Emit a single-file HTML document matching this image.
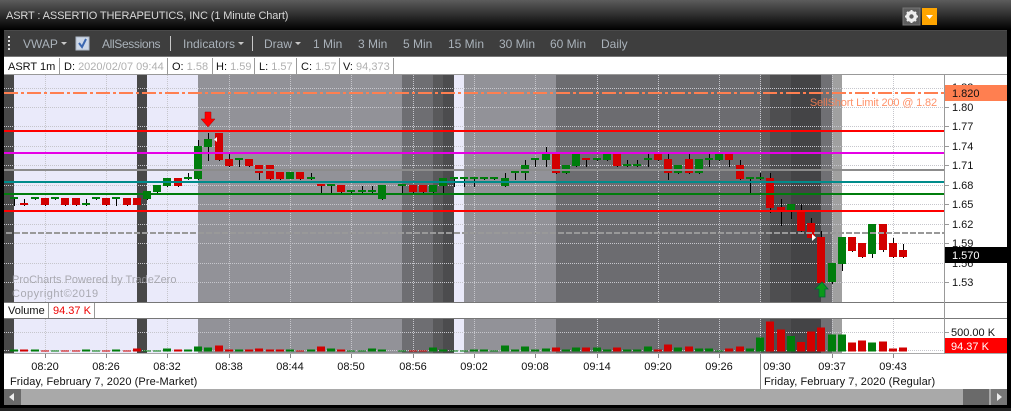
<!DOCTYPE html>
<html><head><meta charset="utf-8"><style>
html,body{margin:0;padding:0;background:#000}
#r{position:relative;width:1011px;height:411px;overflow:hidden;background:#000;font-family:"Liberation Sans",sans-serif;font-size:11px}
#r div{position:absolute;white-space:nowrap}
#hd{left:0;top:0;width:1011px;height:30px;background:linear-gradient(#5c5c5c,#000)}
#tb{left:4px;top:30px;width:1003px;height:27px;background:#3e3e3e;border-top:1px solid #4a4a4a;box-sizing:border-box}
.t{color:#aab2ba;top:37px;line-height:15px;font-size:12px}
.c{top:360px;line-height:14px;color:#111;width:40px;text-align:center;margin-left:-20px}
.a{left:952px;color:#111;line-height:14px}
.i{top:58px;height:16px;line-height:18px;color:#111;background:#fff;border-right:1px solid #999;box-sizing:border-box}
.i span{color:#b0b0b0}
</style></head><body><div id="r">
<div id="hd"></div>
<div style="left:6px;top:9px;color:#d8d8d8;line-height:14px;letter-spacing:-.12px">ASRT : ASSERTIO THERAPEUTICS, INC (1 Minute Chart)</div>
<div id="tb"></div>
<div style="left:4px;top:57px;width:1003px;height:18px;background:#fff"></div>
<div class="i" style="left:4px;width:56px;padding-left:4px">ASRT 1m</div>
<div class="i" style="left:60px;width:108px;padding-left:4px">D: <span>2020/02/07 09:44</span></div>
<div class="i" style="left:168px;width:45px;padding-left:4px">O: <span>1.58</span></div>
<div class="i" style="left:213px;width:42px;padding-left:3px">H: <span>1.59</span></div>
<div class="i" style="left:255px;width:42px;padding-left:4px">L: <span>1.57</span></div>
<div class="i" style="left:297px;width:43px;padding-left:4px">C: <span>1.57</span></div>
<div class="i" style="left:340px;width:54px;padding-left:3px">V: <span>94,373</span></div>

<svg width="1011" height="411" style="position:absolute;left:0;top:0" shape-rendering="crispEdges">
<rect x="4" y="30" width="1003" height="1" fill="#4a4a4a"/>
<rect x="4" y="56" width="1003" height="1" fill="#777"/>
<path fill="#ddd" d="M8 36h2v2h-2zM8 40h2v2h-2zM8 44h2v2h-2zM8 48h2v2h-2z"/>
<path fill="#c8c8c8" shape-rendering="auto" d="M61 42h6l-3 3zM238 42h6l-3 3zM295 42h6l-3 3z"/>
<rect x="76" y="37" width="13" height="13" fill="#cdd8e8" stroke="#aeb8c6"/>
<path d="M79 43l3 4 4-8" fill="none" stroke="#3a66b0" stroke-width="2" shape-rendering="auto"/>
<rect x="170" y="36" width="1" height="15" fill="#c8c8c8"/><rect x="252" y="36" width="1" height="15" fill="#c8c8c8"/>
<rect x="903" y="8" width="17" height="17" fill="#5e5e5e" stroke="#777"/>
<circle cx="911.500" cy="16.500" r="4.200" fill="none" stroke="#eee" stroke-width="2.600" shape-rendering="auto"/>
<path stroke="#eee" stroke-width="2" shape-rendering="auto" d="M911.500 10v13M905 16.500h13M907 12l9 9M916 12l-9 9"/>
<circle cx="911.500" cy="16.500" r="2.200" fill="#5e5e5e" shape-rendering="auto"/>
<rect x="922" y="8" width="15" height="17" fill="#ffa500"/>
<path d="M926 15h7l-3.500 4z" fill="#fff" shape-rendering="auto"/>
<rect x="0" y="30" width="4" height="375" fill="#000"/><rect x="1007" y="30" width="4" height="375" fill="#000"/>
<g>
<rect x="4" y="75" width="1003" height="314" fill="#fff"/>
<rect x="4" y="75" width="10" height="278" fill="#484848"/>
<rect x="14" y="75" width="123" height="278" fill="#eaeafa"/>
<rect x="137" y="75" width="10" height="278" fill="#484848"/>
<rect x="147" y="75" width="51" height="278" fill="#eaeafa"/>
<rect x="198" y="75" width="204" height="278" fill="#929298"/>
<rect x="402" y="75" width="31" height="278" fill="#6e6e72"/>
<rect x="433" y="75" width="10" height="278" fill="#59595b"/>
<rect x="443" y="75" width="11" height="278" fill="#4c4c4e"/>
<rect x="454" y="75" width="10" height="278" fill="#eaeafa"/>
<rect x="464" y="75" width="92" height="278" fill="#929298"/>
<rect x="556" y="75" width="205" height="278" fill="#6c6c70"/>
<rect x="761" y="75" width="9" height="278" fill="#5e5e60"/>
<rect x="770" y="75" width="21" height="278" fill="#4e4e50"/>
<rect x="791" y="75" width="30" height="278" fill="#444446"/>
<rect x="821" y="75" width="11" height="278" fill="#707074"/>
<rect x="832" y="75" width="10" height="278" fill="#a0a0a0"/>
</g>
<path fill="none" stroke="#c6c6cc" stroke-dasharray="1 1" d="M4 88.500H944M4 107.500H944M4 126.500H944M4 146.500H944M4 165.500H944M4 185.500H944M4 204.500H944M4 224.500H944M4 243.500H944M4 263.500H944M4 282.500H944M4 332.500H944M4 350.500H944"/>
<path fill="none" stroke="#c6c6cc" stroke-dasharray="1 1" d="M45.500 75V353M106.500 75V353M167.500 75V353M229.500 75V353M290.500 75V353M351.500 75V353M413.500 75V353M474.500 75V353M535.500 75V353M597.500 75V353M658.500 75V353M719.500 75V353M760.500 75V353M832.500 75V353M893.500 75V353"/>
<g transform="translate(0 137) scale(1 .33333)">
<path fill="#000" d="M14 180h1v27h-1zM24 186h1v21h-1zM35 180h1v9h-1zM45 183h1v24h-1zM55 180h1v9h-1zM65 183h1v24h-1zM76 183h1v24h-1zM86 186h1v21h-1zM96 180h1v9h-1zM106 183h1v24h-1zM116 180h1v27h-1zM127 183h1v24h-1zM137 183h1v21h-1zM147 162h1v27h-1zM157 144h1v24h-1zM167 123h1v27h-1zM178 123h1v27h-1zM188 108h1v21h-1zM198 9h1v120h-1zM208 -12h1v84h-1zM219 -12h1v84h-1zM229 51h1v39h-1zM239 63h1v27h-1zM249 66h1v24h-1zM259 84h1v45h-1zM270 84h1v45h-1zM280 105h1v24h-1zM300 105h1v24h-1zM311 108h1v21h-1zM321 141h1v27h-1zM331 141h1v27h-1zM341 144h1v24h-1zM351 159h1v9h-1zM362 147h1v21h-1zM372 147h1v21h-1zM382 144h1v45h-1zM402 141h1v27h-1zM413 144h1v24h-1zM423 144h1v24h-1zM433 144h1v24h-1zM443 123h1v45h-1zM454 120h1v30h-1zM464 120h1v30h-1zM474 120h1v30h-1zM484 120h1v9h-1zM494 120h1v9h-1zM505 108h1v42h-1zM515 102h1v27h-1zM525 69h1v60h-1zM535 63h1v27h-1zM546 30h1v60h-1zM556 51h1v60h-1zM566 84h1v27h-1zM576 51h1v39h-1zM586 63h1v27h-1zM597 63h1v9h-1zM607 51h1v21h-1zM617 51h1v39h-1zM627 69h1v21h-1zM637 69h1v21h-1zM648 51h1v39h-1zM658 51h1v21h-1zM668 51h1v78h-1zM678 84h1v27h-1zM689 51h1v60h-1zM699 66h1v45h-1zM709 51h1v39h-1zM719 51h1v21h-1zM729 51h1v39h-1zM740 69h1v60h-1zM750 120h1v48h-1zM760 108h1v21h-1zM770 108h1v120h-1zM781 186h1v81h-1zM791 201h1v45h-1zM801 201h1v84h-1zM811 243h1v60h-1zM821 282h1v159h-1zM832 378h1v63h-1zM842 300h1v102h-1zM852 300h1v45h-1zM862 318h1v45h-1zM872 261h1v102h-1zM883 261h1v84h-1zM893 303h1v60h-1zM903 321h1v42h-1z"/>
<path fill="#007d0c" d="M10 180h8v6h-8zM31 180h8v6h-8zM51 180h8v6h-8zM82 198h8v6h-8zM92 180h8v6h-8zM112 180h8v6h-8zM143 162h8v24h-8zM153 144h8v21h-8zM163 123h8v24h-8zM184 120h8v6h-8zM194 27h8v99h-8zM204 6h8v24h-8zM235 63h8v6h-8zM286 105h8v21h-8zM307 120h8v6h-8zM327 141h8v6h-8zM347 159h8v6h-8zM358 159h8v6h-8zM368 159h8v6h-8zM378 144h8v42h-8zM398 141h8v6h-8zM429 144h8v21h-8zM439 123h8v24h-8zM450 120h8v6h-8zM460 120h8v6h-8zM470 120h8v6h-8zM480 120h8v6h-8zM490 120h8v6h-8zM501 123h8v24h-8zM511 102h8v6h-8zM521 84h8v24h-8zM531 63h8v6h-8zM542 51h8v18h-8zM562 84h8v24h-8zM572 51h8v36h-8zM593 63h8v6h-8zM603 51h8v18h-8zM623 81h8v6h-8zM633 81h8v6h-8zM644 63h8v6h-8zM674 84h8v24h-8zM695 66h8v42h-8zM705 63h8v6h-8zM715 51h8v18h-8zM746 120h8v6h-8zM756 120h8v6h-8zM787 201h8v18h-8zM828 378h8v57h-8zM838 300h8v81h-8zM868 261h8v90h-8z"/>
<path fill="#d20000" d="M20 198h8v6h-8zM41 183h8v21h-8zM61 183h8v21h-8zM72 183h8v21h-8zM102 183h8v21h-8zM123 183h8v21h-8zM133 183h8v21h-8zM174 123h8v24h-8zM215 -12h8v81h-8zM225 66h8v21h-8zM245 66h8v21h-8zM255 84h8v24h-8zM266 84h8v42h-8zM276 105h8v21h-8zM296 105h8v21h-8zM317 141h8v6h-8zM337 144h8v21h-8zM409 144h8v21h-8zM419 144h8v21h-8zM552 51h8v57h-8zM582 63h8v6h-8zM613 51h8v36h-8zM654 51h8v18h-8zM664 66h8v42h-8zM685 66h8v42h-8zM725 51h8v18h-8zM736 84h8v42h-8zM766 123h8v90h-8zM777 210h8v9h-8zM797 222h8v60h-8zM807 258h8v45h-8zM817 300h8v138h-8zM848 300h8v42h-8zM858 318h8v42h-8zM879 261h8v78h-8zM889 318h8v42h-8zM899 339h8v21h-8z"/>
</g>
<path fill="none" stroke="#ff7f50" stroke-width="2" stroke-dasharray="14 3 3 3" d="M4 93H944"/>
<rect x="4" y="130" width="940" height="2" fill="#f00"/>
<rect x="4" y="152" width="940" height="2" fill="#e600e6"/>
<rect x="4" y="169" width="940" height="2" fill="#8c8c8c"/>
<rect x="4" y="181" width="940" height="2" fill="#008b8b"/>
<rect x="4" y="193" width="940" height="2" fill="#007d0c"/>
<rect x="4" y="210" width="940" height="2" fill="#f00"/>
<path fill="none" stroke="#999" stroke-width="2" stroke-dasharray="6 2" d="M6 233H944"/>
<path shape-rendering="auto" fill="#f00" stroke="#a00" stroke-width=".5" d="M205 112h6v7h4l-7 8-7-8h4z"/>
<path shape-rendering="auto" fill="#fff" d="M217 137v5l-3-2.500zM812 234l4 3.500-4 3.500z"/>
<path shape-rendering="auto" fill="#0a9a1a" stroke="#063" stroke-width=".8" d="M819 297h6v-8h3l-6-7-7 7h4z"/>
<rect x="4" y="302" width="1003" height="16" fill="#fff"/>
<rect x="4" y="302" width="1003" height="1" fill="#777"/><rect x="4" y="318" width="1003" height="1" fill="#777"/>
<rect x="48" y="303" width="1" height="15" fill="#999"/><rect x="94" y="303" width="1" height="15" fill="#999"/>
<g transform="translate(0 274) scale(1 .33333)">
<path fill="#007d0c" d="M10 226h8V232h-8zM31 226h8V232h-8zM51 229h8V232h-8zM82 226h8V232h-8zM92 229h8V232h-8zM112 226h8V232h-8zM143 229h8V232h-8zM153 229h8V232h-8zM163 223h8V232h-8zM184 226h8V232h-8zM194 217h8V232h-8zM204 220h8V232h-8zM235 226h8V232h-8zM286 226h8V232h-8zM307 226h8V232h-8zM327 223h8V232h-8zM347 229h8V232h-8zM358 229h8V232h-8zM368 223h8V232h-8zM378 226h8V232h-8zM398 229h8V232h-8zM429 220h8V232h-8zM439 226h8V232h-8zM450 229h8V232h-8zM460 229h8V232h-8zM470 226h8V232h-8zM480 226h8V232h-8zM490 229h8V232h-8zM501 214h8V232h-8zM511 226h8V232h-8zM521 217h8V232h-8zM531 226h8V232h-8zM542 223h8V232h-8zM562 226h8V232h-8zM572 220h8V232h-8zM593 220h8V232h-8zM603 226h8V232h-8zM623 226h8V232h-8zM633 226h8V232h-8zM644 217h8V232h-8zM674 220h8V232h-8zM695 223h8V232h-8zM705 223h8V232h-8zM715 229h8V232h-8zM746 223h8V232h-8zM756 190h8V232h-8zM787 186h8V232h-8zM828 181h8V232h-8zM838 181h8V232h-8zM868 205h8V232h-8z"/>
<path fill="#d20000" d="M20 226h8V232h-8zM41 229h8V232h-8zM61 229h8V232h-8zM72 229h8V232h-8zM102 229h8V232h-8zM123 229h8V232h-8zM133 223h8V232h-8zM174 226h8V232h-8zM215 214h8V232h-8zM225 226h8V232h-8zM245 226h8V232h-8zM255 223h8V232h-8zM266 226h8V232h-8zM276 226h8V232h-8zM296 229h8V232h-8zM317 217h8V232h-8zM337 226h8V232h-8zM409 229h8V232h-8zM419 229h8V232h-8zM552 220h8V232h-8zM582 220h8V232h-8zM613 220h8V232h-8zM654 226h8V232h-8zM664 211h8V232h-8zM685 217h8V232h-8zM725 223h8V232h-8zM736 217h8V232h-8zM766 142h8V232h-8zM777 166h8V232h-8zM797 204h8V232h-8zM807 172h8V232h-8zM817 160h8V232h-8zM848 205h8V232h-8zM858 199h8V232h-8zM879 202h8V232h-8zM889 223h8V232h-8zM899 220h8V232h-8z"/>
</g>
<rect x="4" y="353" width="1003" height="1" fill="#a8a8a8"/>
<rect x="944" y="75" width="1" height="279" fill="#999"/>
<rect x="4" y="74" width="1003" height="1" fill="#999"/>
<path stroke="#999" d="M945 107.500h4M945 126.500h4M945 146.500h4M945 165.500h4M945 185.500h4M945 204.500h4M945 224.500h4M945 243.500h4M945 282.500h4M945 332.500h4"/>
<path stroke="#888" d="M45.500 354v4M106.500 354v4M167.500 354v4M229.500 354v4M290.500 354v4M351.500 354v4M413.500 354v4M474.500 354v4M535.500 354v4M597.500 354v4M658.500 354v4M719.500 354v4M832.500 354v4M893.500 354v4"/>
<rect x="760" y="354" width="1" height="35" fill="#888"/>
<rect x="4" y="389" width="1003" height="16" fill="#a9a9a9"/>
<rect x="4" y="389" width="17" height="16" fill="#6a6a6a"/>
<path d="M14 393v8l-5-4z" fill="#eee" shape-rendering="auto"/>
<rect x="963" y="389" width="26" height="16" fill="#6a6a6a"/>
<rect x="991" y="389" width="16" height="16" fill="#777"/>
<path d="M997 393v8l5-4z" fill="#eee" shape-rendering="auto"/>
<rect x="0" y="408" width="1011" height="3" fill="#222"/>
</svg>

<div style="left:12px;top:273px;color:#9a9aa0;line-height:14px;opacity:.8">ProCharts Powered by TradeZero</div>
<div style="left:12px;top:287px;color:#9a9aa0;line-height:14px;opacity:.8;letter-spacing:.5px">Copyright©2019</div>
<div style="right:74px;top:96px;color:#ff7f50;line-height:14px;opacity:.85;letter-spacing:-.15px">SellShort Limit 200 @ 1.82</div>

<div class="t" style="left:23px">VWAP</div>
<div class="t" style="left:102px;letter-spacing:-.35px">AllSessions</div>
<div class="t" style="left:183px">Indicators</div>
<div class="t" style="left:264px">Draw</div>
<div class="t" style="left:313px">1 Min</div>
<div class="t" style="left:358px">3 Min</div>
<div class="t" style="left:403px">5 Min</div>
<div class="t" style="left:448px">15 Min</div>
<div class="t" style="left:499px">30 Min</div>
<div class="t" style="left:550px">60 Min</div>
<div class="t" style="left:601px">Daily</div>

<div class="a" style="top:81px">1.83</div>
<div class="a" style="top:257px">1.56</div>
<div style="left:945px;top:85px;width:62px;height:16px;background:#ff7f50"></div>
<div style="left:945px;top:247px;width:62px;height:16px;background:#000"></div>
<div style="left:945px;top:338px;width:62px;height:15px;background:#f00"></div>
<div class="a" style="top:87px">1.820</div>
<div class="a" style="top:101px">1.80</div>
<div class="a" style="top:120px">1.77</div>
<div class="a" style="top:140px">1.74</div>
<div class="a" style="top:159px">1.71</div>
<div class="a" style="top:179px">1.68</div>
<div class="a" style="top:198px">1.65</div>
<div class="a" style="top:218px">1.62</div>
<div class="a" style="top:237px">1.59</div>
<div class="a" style="top:249px;color:#fff">1.570</div>
<div class="a" style="top:276px">1.53</div>
<div class="a" style="top:326px;left:951px">500.00 K</div>
<div class="a" style="top:340px;left:951px;color:#fff">94.37 K</div>

<div style="left:8px;top:304px;line-height:15px;color:#111">Volume</div>
<div style="left:53px;top:304px;line-height:15px;color:#e00">94.37 K</div>

<div class="c" style="left:45px">08:20</div>
<div class="c" style="left:106px">08:26</div>
<div class="c" style="left:167px">08:32</div>
<div class="c" style="left:229px">08:38</div>
<div class="c" style="left:290px">08:44</div>
<div class="c" style="left:351px">08:50</div>
<div class="c" style="left:413px">08:56</div>
<div class="c" style="left:474px">09:02</div>
<div class="c" style="left:535px">09:08</div>
<div class="c" style="left:597px">09:14</div>
<div class="c" style="left:658px">09:20</div>
<div class="c" style="left:719px">09:26</div>
<div class="c" style="left:777px">09:30</div>
<div class="c" style="left:832px">09:37</div>
<div class="c" style="left:893px">09:43</div>
<div style="left:10px;top:375px;line-height:14px;color:#111;letter-spacing:.08px">Friday, February 7, 2020 (Pre-Market)</div>
<div style="left:764px;top:375px;line-height:14px;color:#111;letter-spacing:.08px">Friday, February 7, 2020 (Regular)</div>
</div></body></html>
